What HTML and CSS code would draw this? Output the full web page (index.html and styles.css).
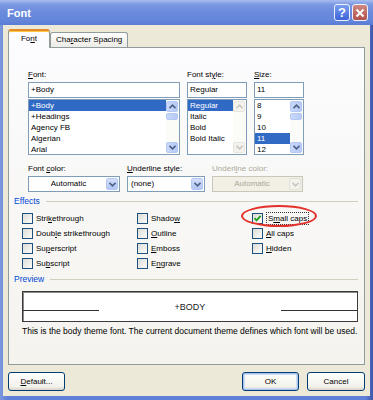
FILE: index.html
```html
<!DOCTYPE html>
<html lang="en">
<head>
    <meta charset="UTF-8">
    <title>Font</title>
    <link rel="stylesheet" href="styles.css">
</head>
<body>
    <div class="window">
        <div class="titlebar">
            <span class="title">Font</span>
            <div class="caption-btns">
                <span class="cap-btn help">?</span>
                <span class="cap-btn close">
                    <svg viewBox="0 0 10 10" width="10" height="10"><path d="M1.5 1.5L8.5 8.5M8.5 1.5L1.5 8.5" stroke="#fff" stroke-width="2" fill="none"/></svg>
                </span>
            </div>
        </div>

        <div class="client">
            <div class="tabs">
                <div class="tab active">Fo<u>n</u>t</div>
                <div class="tab">Cha<u>r</u>acter Spacing</div>
            </div>

            <div class="panel">
                <!-- font / style / size pickers -->
                <div class="font-fields">
                    <div class="field">
                        <label><u>F</u>ont:</label>
                        <div class="textbox">+Body</div>
                        <div class="listbox">
                            <ul>
                                <li class="sel">+Body</li>
                                <li>+Headings</li>
                                <li>Agency FB</li>
                                <li>Algerian</li>
                                <li>Arial</li>
                            </ul>
                            <div class="scrollbar">
                                <span class="sb-btn"><svg viewBox="0 0 7 5" width="7" height="5"><path d="M0.5 4.2L3.5 1.2L6.5 4.2" fill="none" stroke="#4d6185" stroke-width="1.6"/></svg></span>
                                <span class="sb-thumb"></span>
                                <span class="sb-track"></span>
                                <span class="sb-btn"><svg viewBox="0 0 7 5" width="7" height="5"><path d="M0.5 0.8L3.5 3.8L6.5 0.8" fill="none" stroke="#4d6185" stroke-width="1.6"/></svg></span>
                            </div>
                        </div>
                    </div>
                    <div class="field">
                        <label>Font st<u>y</u>le:</label>
                        <div class="textbox">Regular</div>
                        <div class="listbox">
                            <ul>
                                <li class="sel">Regular</li>
                                <li>Italic</li>
                                <li>Bold</li>
                                <li>Bold Italic</li>
                            </ul>
                            <div class="scrollbar disabled">
                                <span class="sb-btn"><svg viewBox="0 0 7 5" width="7" height="5"><path d="M0.5 4.2L3.5 1.2L6.5 4.2" fill="none" stroke="#c9c8c0" stroke-width="1.6"/></svg></span>
                                <span class="sb-track"></span>
                                <span class="sb-btn"><svg viewBox="0 0 7 5" width="7" height="5"><path d="M0.5 0.8L3.5 3.8L6.5 0.8" fill="none" stroke="#c9c8c0" stroke-width="1.6"/></svg></span>
                            </div>
                        </div>
                    </div>
                    <div class="field">
                        <label><u>S</u>ize:</label>
                        <div class="textbox">11</div>
                        <div class="listbox">
                            <ul>
                                <li>8</li>
                                <li>9</li>
                                <li>10</li>
                                <li class="sel">11</li>
                                <li>12</li>
                            </ul>
                            <div class="scrollbar">
                                <span class="sb-btn"><svg viewBox="0 0 7 5" width="7" height="5"><path d="M0.5 4.2L3.5 1.2L6.5 4.2" fill="none" stroke="#4d6185" stroke-width="1.6"/></svg></span>
                                <span class="sb-thumb"></span>
                                <span class="sb-track"></span>
                                <span class="sb-btn"><svg viewBox="0 0 7 5" width="7" height="5"><path d="M0.5 0.8L3.5 3.8L6.5 0.8" fill="none" stroke="#4d6185" stroke-width="1.6"/></svg></span>
                            </div>
                        </div>
                    </div>
                </div>

                <!-- colour and underline -->
                <div class="combo-row">
                    <div class="field">
                        <label>Font <u>c</u>olor:</label>
                        <div class="combo">
                            <span class="combo-text center">Automatic</span>
                            <span class="combo-btn"><svg viewBox="0 0 7 5" width="7" height="5"><path d="M0.5 0.8L3.5 3.8L6.5 0.8" fill="none" stroke="#4d6185" stroke-width="1.6"/></svg></span>
                        </div>
                    </div>
                    <div class="field">
                        <label><u>U</u>nderline style:</label>
                        <div class="combo">
                            <span class="combo-text">(none)</span>
                            <span class="combo-btn"><svg viewBox="0 0 7 5" width="7" height="5"><path d="M0.5 0.8L3.5 3.8L6.5 0.8" fill="none" stroke="#4d6185" stroke-width="1.6"/></svg></span>
                        </div>
                    </div>
                    <div class="field disabled">
                        <label>Underl<u>i</u>ne color:</label>
                        <div class="combo">
                            <span class="combo-text center">Automatic</span>
                            <span class="combo-btn"><svg viewBox="0 0 7 5" width="7" height="5"><path d="M0.5 0.8L3.5 3.8L6.5 0.8" fill="none" stroke="#c9c8c0" stroke-width="1.6"/></svg></span>
                        </div>
                    </div>
                </div>

                <div class="group-head"><span>Effects</span><i></i></div>
                <div class="effects">
                    <div class="cb"><span class="box"></span><span>Stri<u>k</u>ethrough</span></div>
                    <div class="cb"><span class="box"></span><span>Doub<u>l</u>e strikethrough</span></div>
                    <div class="cb"><span class="box"></span><span>Su<u>p</u>erscript</span></div>
                    <div class="cb"><span class="box"></span><span>Su<u>b</u>script</span></div>
                    <div class="cb"><span class="box"></span><span>Shado<u>w</u></span></div>
                    <div class="cb"><span class="box"></span><span><u>O</u>utline</span></div>
                    <div class="cb"><span class="box"></span><span><u>E</u>mboss</span></div>
                    <div class="cb"><span class="box"></span><span>E<u>n</u>grave</span></div>
                    <div class="cb"><span class="box"><svg viewBox="0 0 9 9" width="9" height="9"><path d="M1.5 4.2L3.6 6.4L7.6 1.8" fill="none" stroke="#21a121" stroke-width="1.8"/></svg></span><span class="focus">S<u>m</u>all caps</span></div>
                    <div class="cb"><span class="box"></span><span><u>A</u>ll caps</span></div>
                    <div class="cb"><span class="box"></span><span><u>H</u>idden</span></div>
                </div>

                <div class="group-head preview-head"><span>Preview</span><i></i></div>
                <div class="preview">
                    <i class="rule"></i>
                    <span class="sample">+Body</span>
                    <i class="rule"></i>
                </div>
                <p class="desc">This is the body theme font. The current document theme defines which font will be used.</p>

                <span class="highlight"></span>
            </div>

            <div class="footer">
                <span class="btn"><u>D</u>efault...</span>
                <span class="btn ok">OK</span>
                <span class="btn cancel">Cancel</span>
            </div>
        </div>
    </div>
</body>
</html>
```

FILE: styles.css
```css
*{
    margin: 0;
    padding: 0;
    box-sizing: border-box;
}
body{
    width: 373px;
    height: 400px;
    overflow: hidden;
    font-family: "Liberation Sans", Arial, sans-serif;
    font-size: 8px;
    color: #000;
    background: #fff;
}
u{
    text-decoration: underline;
    text-underline-offset: 1px;
}
.window{
    width: 373px;
    height: 400px;
    display: flex;
    flex-direction: column;
    background: linear-gradient(90deg, #7c98de, #5f80d8 2%, #5f80d8 98%, #3d55a8);
}
.titlebar{
    height: 25px;
    flex: none;
    display: flex;
    align-items: center;
    justify-content: space-between;
    padding: 0 5px 0 7px;
    background: linear-gradient(#a9bdf0, #7b98e2 18%, #6a8adc 50%, #6586da 80%, #5a7cd4);
}
.title{
    color: #fff;
    font-weight: bold;
    font-size: 11px;
}
.caption-btns{
    display: flex;
    gap: 2px;
}
.cap-btn{
    width: 16px;
    height: 17px;
    border: 1px solid #eef2fc;
    border-radius: 3px;
    display: flex;
    align-items: center;
    justify-content: center;
    color: #fff;
    font-weight: bold;
    font-size: 13px;
}
.help{
    background: linear-gradient(#7a9cf0, #3d64d8);
}
.close{
    background: linear-gradient(#cf8a82, #b0514c);
}
.client{
    flex: 1;
    margin: 0 3px 4px;
    background: #ece9d8;
    padding: 4px 5px 0;
    display: flex;
    flex-direction: column;
}

/* tabs */
.tabs{
    height: 18px;
    display: flex;
    align-items: flex-end;
}
.tab{
    height: 15px;
    padding: 0 5px;
    border: 1px solid #919b9c;
    border-bottom: none;
    border-radius: 3px 3px 0 0;
    background: linear-gradient(#fefefe, #ecebe5);
    line-height: 14px;
    white-space: nowrap;
}
.tab.active{
    width: 42px;
    height: 19px;
    margin-bottom: -1px;
    text-align: center;
    border-top: 2px solid #e68b2c;
    box-shadow: inset 0 1px #ffc73c;
    background: #fcfcfe;
    line-height: 16px;
    position: relative;
    z-index: 1;
}

.panel{
    height: 318px;
    border: 1px solid #919b9c;
    background: linear-gradient(#fcfcfe, #f4f3ee);
    padding: 21px 6px 0 5px;
    position: relative;
}
label{
    display: block;
    height: 12px;
    line-height: 12px;
    margin-bottom: 1px;
    white-space: nowrap;
}

/* font pickers */
.font-fields{
    display: grid;
    grid-template-columns: 152px 60px 50px;
    column-gap: 7px;
    margin-left: 14px;
}
.textbox{
    height: 16px;
    border: 1px solid #7f9db9;
    background: #fff;
    padding-left: 2px;
    line-height: 14px;
}
.listbox{
    height: 56px;
    margin-top: 1px;
    border: 1px solid #7f9db9;
    background: #fff;
    display: flex;
}
.listbox ul{
    flex: 1;
    list-style: none;
}
.listbox li{
    height: 11px;
    line-height: 11px;
    padding-left: 2px;
}
.listbox li.sel{
    background: #316ac5;
    color: #fff;
}
.scrollbar{
    width: 13px;
    display: flex;
    flex-direction: column;
    background: #fbfbf8;
    padding: 1px 1px 1px 0;
}
.sb-btn,
.sb-thumb{
    height: 11px;
    border: 1px solid #b5c8f3;
    border-radius: 2px;
    background: linear-gradient(90deg, #c9d8fc, #b6caf6);
    display: flex;
    align-items: center;
    justify-content: center;
}
.sb-thumb{
    height: 7px;
    margin-top: 1px;
}
.sb-track{
    flex: 1;
}
.scrollbar.disabled .sb-btn{
    border-color: #e8e6dc;
    background: #f3f2ec;
}

/* combos */
.combo-row{
    display: grid;
    grid-template-columns: 92px 78px 91px;
    column-gap: 7px;
    margin: 8px 0 0 14px;
}
.combo{
    height: 16px;
    border: 1px solid #7f9db9;
    background: #fff;
    display: flex;
}
.combo-text{
    flex: 1;
    line-height: 14px;
    padding-left: 3px;
}
.combo-text.center{
    text-align: center;
}
.combo-btn{
    width: 12px;
    margin: 1px;
    border: 1px solid #b5c8f3;
    border-radius: 2px;
    background: linear-gradient(#d2defc, #b2c6f6);
    display: flex;
    align-items: center;
    justify-content: center;
}
.disabled label{
    color: #aca899;
}
.disabled .combo{
    border-color: #c9c7ba;
    background: #f1efe6;
    color: #aca899;
}
.disabled .combo-btn{
    border-color: #e3e1d6;
    background: #f3f2ec;
}

/* group headers */
.group-head{
    display: flex;
    align-items: center;
    gap: 6px;
    height: 12px;
    margin-top: 3px;
    color: #0046d5;
    font-size: 8.5px;
}
.group-head i{
    flex: 1;
    height: 1px;
    background: #d0d0bf;
}
.preview-head{
    margin-top: 2px;
}

/* effects */
.effects{
    display: grid;
    grid-template-columns: repeat(3, 115px);
    grid-template-rows: repeat(4, 15px);
    grid-auto-flow: column;
    margin: 4px 0 0 8px;
}
.cb{
    display: flex;
    align-items: center;
    gap: 3px;
    white-space: nowrap;
}
.box{
    width: 11px;
    height: 11px;
    border: 1px solid #1c5180;
    background: linear-gradient(135deg, #dcdcd7, #fbfbf9);
    display: flex;
    align-items: center;
    justify-content: center;
}
.focus{
    border: 1px dotted #333;
    padding: 0 1px;
    line-height: 11px;
}
.highlight{
    position: absolute;
    left: 232px;
    top: 157px;
    width: 76px;
    height: 22px;
    border: 2px solid #e3302a;
    border-radius: 50%;
}

/* preview */
.preview{
    height: 31px;
    margin: 6px 0 0 8px;
    border: 1px solid #3a3a3a;
    box-shadow: inset 1px 1px #8a8a8a;
    background: #fff;
    display: flex;
    align-items: center;
}
.rule{
    width: 76px;
    height: 1px;
    margin-top: 8px;
    background: #333;
}
.sample{
    flex: 1;
    text-align: center;
    text-transform: uppercase;
    font-size: 9px;
    color: #222;
}
.desc{
    margin: 3px 0 0 8px;
    line-height: 12px;
    font-size: 8.5px;
    white-space: nowrap;
}

/* buttons */
.footer{
    display: flex;
    gap: 8px;
    margin-top: 7px;
}
.btn{
    width: 57px;
    height: 19px;
    border: 1px solid #003c74;
    border-radius: 3px;
    background: linear-gradient(#fff, #f2f1eb 80%, #d8d3c8);
    text-align: center;
    line-height: 17px;
}
.btn.ok{
    margin-left: auto;
    box-shadow: inset 0 0 0 1px #a8c4ef, inset 0 0 0 2px #cddcf5;
}
.btn.cancel{
    width: 58px;
}
```
